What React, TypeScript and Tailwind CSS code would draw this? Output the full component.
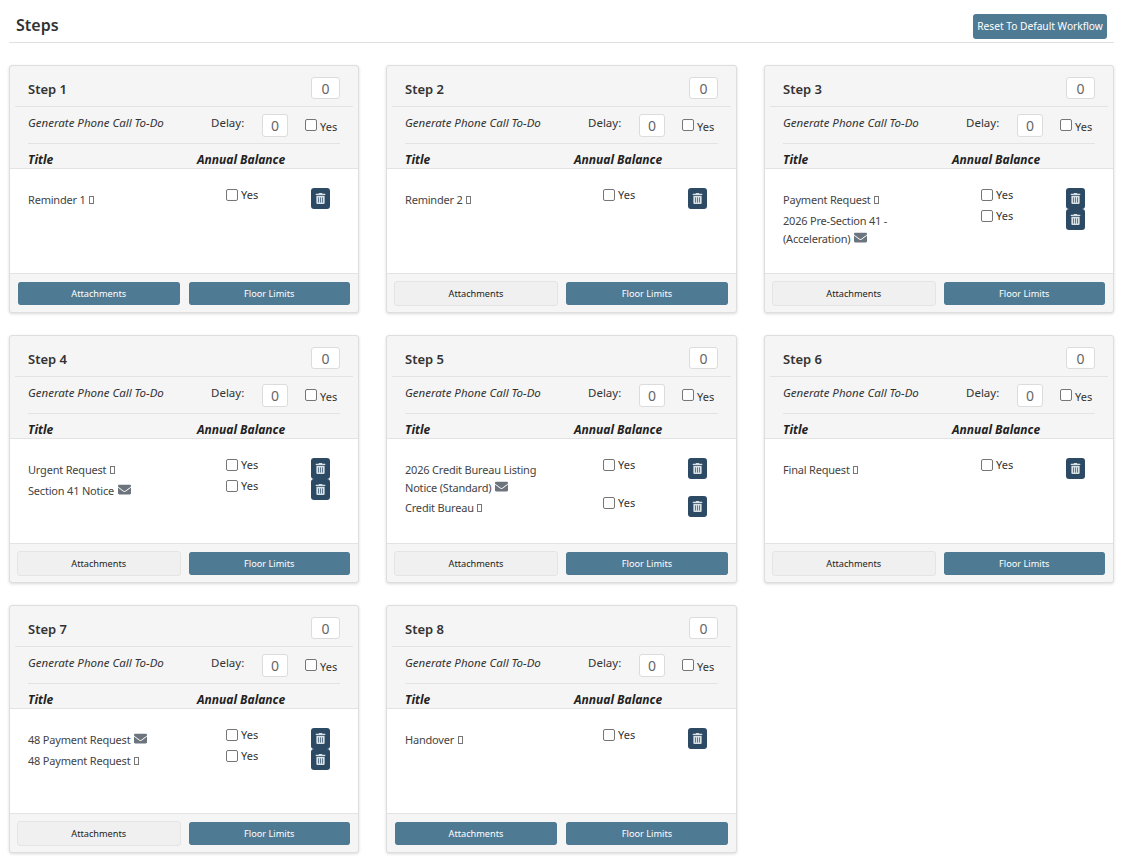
import { FaEnvelope, FaTrashAlt } from 'react-icons/fa';

type Row = { title: string; kind: 'sms' | 'mail' };
type Step = { name: string; attachBlue?: boolean; rows: Row[] };

const steps: Step[] = [
  { name: 'Step 1', attachBlue: true, rows: [{ title: 'Reminder 1', kind: 'sms' }] },
  { name: 'Step 2', rows: [{ title: 'Reminder 2', kind: 'sms' }] },
  {
    name: 'Step 3',
    rows: [
      { title: 'Payment Request', kind: 'sms' },
      { title: '2026 Pre-Section 41 - (Acceleration)', kind: 'mail' },
    ],
  },
  {
    name: 'Step 4',
    rows: [
      { title: 'Urgent Request', kind: 'sms' },
      { title: 'Section 41 Notice', kind: 'mail' },
    ],
  },
  {
    name: 'Step 5',
    rows: [
      { title: '2026 Credit Bureau Listing Notice (Standard)', kind: 'mail' },
      { title: 'Credit Bureau', kind: 'sms' },
    ],
  },
  { name: 'Step 6', rows: [{ title: 'Final Request', kind: 'sms' }] },
  {
    name: 'Step 7',
    rows: [
      { title: '48 Payment Request', kind: 'mail' },
      { title: '48 Payment Request', kind: 'sms' },
    ],
  },
  { name: 'Step 8', attachBlue: true, rows: [{ title: 'Handover', kind: 'sms' }] },
];

function Check() {
  return <input type="checkbox" className="w-[12px] h-[12px] m-0 appearance-none bg-white border border-[#767676] rounded-[2px]" />;
}

function NumBox({ className }: { className: string }) {
  return (
    <div className={`flex items-center justify-center bg-white border border-[#dcdcdc] rounded-[3px] text-[14px] text-[#666] ${className}`}>
      0
    </div>
  );
}

function StepCard({ step }: { step: Step }) {
  return (
    <div className="h-[248px] flex flex-col bg-[#f5f5f5] border border-[#dedede] rounded-[3px] shadow-[0_1px_3px_rgba(0,0,0,0.15)]">
      {/* Header */}
      <div className="h-[41px] mx-[5px] px-[13px] flex items-center justify-between border-b border-[#e3e3e3]">
        <span className="text-[13px] font-semibold text-[#333] relative top-[4px]">{step.name}</span>
        <NumBox className="w-[29px] h-[22px] relative top-[2px]" />
      </div>

      {/* Phone call row */}
      <div className="h-[37px] mx-[18px] flex items-center border-b border-[#e3e3e3] text-[11.5px] text-[#333]">
        <span className="w-[183px] italic relative -top-[2px]">Generate Phone Call To-Do</span>
        <span className="w-[51px] relative -top-[2px]">Delay:</span>
        <NumBox className="w-[26px] h-[23px]" />
        <span className="ml-[17px] flex items-center gap-[3px] text-[11px]">
          <Check />
          <span className="relative top-[2px]">Yes</span>
        </span>
      </div>

      {/* Column titles */}
      <div className="h-[24px] px-[18px] flex items-end text-[12px] leading-[16px] font-bold italic text-[#222]">
        <span className="w-[169px]">Title</span>
        <span>Annual Balance</span>
      </div>

      {/* Rows */}
      <div className="flex-1 bg-white border-y border-[#e3e3e3] pt-[19px] pl-[18px]">
        {step.rows.map((row, i) => (
          <div key={i} className="flex items-start">
            <div className="w-[198px] pr-[58px] pt-[3px] -mb-[1px] text-[11px] tracking-[-0.2px] leading-[18px] text-[#444]">
              {row.title}{' '}
              {row.kind === 'mail' ? (
                <FaEnvelope className="inline-block align-[-1px] ml-[1px] text-[13px] text-[#6c757d]" />
              ) : (
                <span className="inline-block w-[5px] h-[8px] ml-[1px] border border-[#777]" />
              )}
            </div>
            <div className="w-[85px] -mt-[1px] flex items-center gap-[3px] text-[11px] leading-[15px] text-[#333]">
              <Check />
              <span>Yes</span>
            </div>
            <button className="w-[19px] h-[21px] flex items-center justify-center bg-[#2c4a64] rounded-[3px] text-[#d8e2e6]">
              <FaTrashAlt className="text-[11px]" />
            </button>
          </div>
        ))}
      </div>

      {/* Footer */}
      <div className="h-[38px] px-[7px] flex items-center gap-[7px] text-[9.2px]">
        <button
          className={
            step.attachBlue
              ? 'flex-1 h-[25px] pt-[2px] bg-[#4f7a93] bg-clip-padding border border-[#f5f5f5] text-white rounded-[3px]'
              : 'flex-1 h-[25px] pt-[2px] bg-[#f0f0f0] border border-[#e4e4e4] text-[#222] rounded-[3px]'
          }
        >
          Attachments
        </button>
        <button className="flex-1 h-[25px] pt-[2px] bg-[#4f7a93] bg-clip-padding border border-[#f5f5f5] text-white rounded-[3px]">
          Floor Limits
        </button>
      </div>
    </div>
  );
}

export default function App() {
  return (
    <div className="w-[1123px] h-[867px] bg-white overflow-hidden pl-[9px] font-['Noto_Sans','Open_Sans',sans-serif]">
      <div className="w-[1105px] h-[43px] flex items-end justify-between border-b border-[#e0e0e0] px-[7px] pb-[3px]">
        <span className="text-[16px] font-semibold text-[#333] relative -top-[2px]">Steps</span>
        <button className="w-[134px] h-[25px] bg-[#4f7a93] text-white text-[10.2px] rounded-[3px]">Reset To Default Workflow</button>
      </div>
      <div className="w-[1105px] mt-[22px] grid grid-cols-[350px_351px_350px] gap-x-[27px] gap-y-[22px]">
        {steps.map((s) => (
          <StepCard key={s.name} step={s} />
        ))}
      </div>
    </div>
  );
}
